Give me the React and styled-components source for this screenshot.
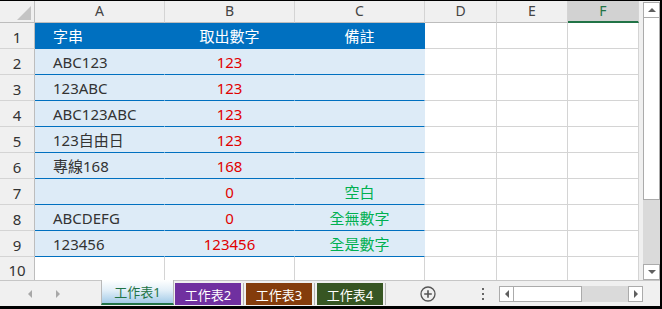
import React from "react";
import styled, { createGlobalStyle } from "styled-components";

const GlobalStyle = createGlobalStyle`
	html, body {
		margin: 0;
		padding: 0;
		background: #ffffff;
	}
	body {
		font-family: "Noto Sans", "Noto Sans CJK TC", sans-serif;
	}
`;

const BLUE = "#0070c0";
const BAND = "#ddebf7";
const GRID = "#d4d4d4";
const RED = "#e00000";
const GREEN = "#00b050";
const EXCEL_GREEN = "#217346";

const columns = ["A", "B", "C", "D", "E", "F"];

const rows = [
	{ a: "字串", b: "取出數字", c: "備註", head: true },
	{ a: "ABC123", b: "123", c: "" },
	{ a: "123ABC", b: "123", c: "" },
	{ a: "ABC123ABC", b: "123", c: "" },
	{ a: "123自由日", b: "123", c: "" },
	{ a: "專線168", b: "168", c: "" },
	{ a: "", b: "0", c: "空白" },
	{ a: "ABCDEFG", b: "0", c: "全無數字" },
	{ a: "123456", b: "123456", c: "全是數字" }
];

const sheets = [
	{ name: "工作表2", color: "#7030a0" },
	{ name: "工作表3", color: "#843c0c" },
	{ name: "工作表4", color: "#375623" }
];

const Window = styled.div`
	width: 662px;
	height: 309px;
	box-sizing: border-box;
	border-top: 1px solid #000;
	border-right: 2px solid #000;
	border-bottom: 3px solid #000;
	background: #f0f0f0;
	display: flex;
	flex-direction: column;
	overflow: hidden;
`;

const SheetArea = styled.div`
	display: flex;
	height: 279px;
`;

const Grid = styled.div`
	display: grid;
	grid-template-columns: 35px 130px 130px 130px 72px 71px 71px;
	grid-template-rows: 22px repeat(9, 26px) 23px;
	background: #fff;
	width: 639px;
`;

const Corner = styled.div`
	box-sizing: border-box;
	background: #f0f0f0;
	border-right: 1px solid #bdbdbd;
	border-bottom: 1px solid #bdbdbd;
	position: relative;
	&::after {
		content: "";
		position: absolute;
		left: 17px;
		top: 5px;
		width: 14px;
		height: 14px;
		background: #c4c4c4;
		clip-path: polygon(100% 0, 100% 100%, 0 100%);
	}
`;

const ColHead = styled.div`
	box-sizing: border-box;
	background: ${p => (p.$selected ? "#d2d2d2" : "#f0f0f0")};
	border-right: 1px solid ${GRID};
	border-bottom: ${p =>
		p.$selected ? `2px solid ${EXCEL_GREEN}` : "1px solid #bdbdbd"};
	color: ${p => (p.$selected ? EXCEL_GREEN : "#444")};
	font-size: 14px;
	display: flex;
	align-items: center;
	justify-content: center;
	padding-bottom: 2px;
`;

const RowHead = styled.div`
	box-sizing: border-box;
	background: #f0f0f0;
	border-right: 1px solid #bdbdbd;
	border-bottom: ${p => (p.$last ? "none" : `1px solid ${GRID}`)};
	color: #333;
	font-size: 15px;
	display: flex;
	align-items: center;
	justify-content: center;
	padding-top: 2px;
`;

const Cell = styled.div`
	box-sizing: border-box;
	background: ${p =>
		p.$kind === "head" ? BLUE : p.$kind === "band" ? BAND : "#fff"};
	border-right: 1px solid
		${p => (p.$kind === "head" ? BLUE : p.$kind === "band" ? BAND : GRID)};
	border-bottom: ${p =>
		p.$last
			? "none"
			: `1px solid ${p.$kind ? BLUE : GRID}`};
	color: ${p => p.$color || "#333"};
	font-size: 15px;
	display: flex;
	align-items: center;
	justify-content: ${p => (p.$align === "left" ? "flex-start" : "center")};
	padding-left: ${p => (p.$align === "left" ? "18px" : "0")};
	white-space: nowrap;
`;

const VScroll = styled.div`
	width: 17px;
	margin-left: 4px;
	padding-top: 1px;
	display: flex;
	flex-direction: column;
`;

const ScrollButton = styled.div`
	box-sizing: border-box;
	width: ${p => (p.$horizontal ? "15px" : "17px")};
	height: ${p => (p.$horizontal ? "16px" : "16px")};
	background: #fff;
	border: 1px solid #ababab;
	display: flex;
	align-items: center;
	justify-content: center;
	flex-shrink: 0;
`;

const Arrow = styled.span`
	width: 0;
	height: 0;
	${p =>
		p.$dir === "up" &&
		`border-left: 4px solid transparent; border-right: 4px solid transparent; border-bottom: 4px solid ${p.$tone || "#5f5f5f"};`}
	${p =>
		p.$dir === "down" &&
		`border-left: 4px solid transparent; border-right: 4px solid transparent; border-top: 4px solid ${p.$tone || "#5f5f5f"};`}
	${p =>
		p.$dir === "left" &&
		`border-top: 4px solid transparent; border-bottom: 4px solid transparent; border-right: 4px solid ${p.$tone || "#5f5f5f"};`}
	${p =>
		p.$dir === "right" &&
		`border-top: 4px solid transparent; border-bottom: 4px solid transparent; border-left: 4px solid ${p.$tone || "#5f5f5f"};`}
`;

const VThumb = styled.div`
	box-sizing: border-box;
	height: 182px;
	background: #fff;
	border: 1px solid #ababab;
	border-top: none;
`;

const Track = styled.div`
	flex: 1;
	background: #dadada;
`;

const TabBar = styled.div`
	box-sizing: border-box;
	height: 26px;
	border-top: 1px solid #c6c6c6;
	display: flex;
	align-items: center;
`;

const NavArea = styled.div`
	width: 101px;
	height: 25px;
	display: flex;
	align-items: center;
	padding-left: 28px;
	gap: 24px;
	box-sizing: border-box;
`;

const ActiveTab = styled.div`
	box-sizing: border-box;
	align-self: flex-start;
	margin-top: -1px;
	width: 73px;
	height: 25px;
	border-left: 1px solid #b9b9b9;
	border-right: 1px solid #b9b9b9;
	border-bottom: 2px solid ${EXCEL_GREEN};
	background: linear-gradient(to bottom, #ffffff 0%, #e2eff8 45%, #a3cbe8 100%);
	color: ${EXCEL_GREEN};
	font-size: 13px;
	display: flex;
	align-items: center;
	justify-content: center;
`;

const Tab = styled.div`
	align-self: flex-start;
	margin-top: 2px;
	margin-left: ${p => p.$gap || 0}px;
	width: 66px;
	height: 22px;
	background: ${p => p.$color};
	color: #fff;
	font-size: 13px;
	display: flex;
	align-items: center;
	justify-content: center;
`;

const TabSep = styled.div`
	align-self: flex-start;
	margin: 2px 2px 0 2px;
	width: 1px;
	height: 22px;
	background: #b4b4b4;
`;

const AddSheet = styled.svg`
	margin-left: 32px;
	flex-shrink: 0;
`;

const Dots = styled.div`
	margin-left: 46px;
	display: flex;
	flex-direction: column;
	gap: 3px;
	& > span {
		width: 2px;
		height: 2px;
		background: #666;
	}
`;

const HScroll = styled.div`
	margin-left: 15px;
	width: 144px;
	height: 16px;
	display: flex;
`;

const HThumb = styled.div`
	box-sizing: border-box;
	width: 68px;
	background: #fff;
	border: 1px solid #ababab;
	border-left: none;
`;

export default function App() {
	return (
		<>
			<GlobalStyle />
			<Window>
				<SheetArea>
					<Grid>
						<Corner />
						{columns.map(c => (
							<ColHead key={c} $selected={c === "F"}>
								{c}
							</ColHead>
						))}
						{rows.map((r, i) => {
							const kind = r.head ? "head" : "band";
							return (
								<React.Fragment key={i}>
									<RowHead>{i + 1}</RowHead>
									<Cell $kind={kind} $align="left" $color={r.head ? "#fff" : "#333"}>
										{r.a}
									</Cell>
									<Cell $kind={kind} $color={r.head ? "#fff" : RED}>
										{r.b}
									</Cell>
									<Cell $kind={kind} $color={r.head ? "#fff" : GREEN}>
										{r.c}
									</Cell>
									<Cell />
									<Cell />
									<Cell />
								</React.Fragment>
							);
						})}
						<RowHead $last>10</RowHead>
						{[0, 1, 2, 3, 4, 5].map(k => (
							<Cell key={k} $last />
						))}
					</Grid>
					<VScroll>
						<ScrollButton>
							<Arrow $dir="up" />
						</ScrollButton>
						<VThumb />
						<Track />
						<ScrollButton>
							<Arrow $dir="down" />
						</ScrollButton>
					</VScroll>
				</SheetArea>
				<TabBar>
					<NavArea>
						<Arrow $dir="left" $tone="#a8a8a8" />
						<Arrow $dir="right" $tone="#a8a8a8" />
					</NavArea>
					<ActiveTab>工作表1</ActiveTab>
					{sheets.map((s, i) => (
						<React.Fragment key={s.name}>
							<Tab $color={s.color} $gap={i === 0 ? 1 : 0}>
								{s.name}
							</Tab>
							<TabSep />
						</React.Fragment>
					))}
					<AddSheet width="16" height="16" viewBox="0 0 16 16">
						<circle cx="8" cy="8" r="7" fill="none" stroke="#555" strokeWidth="1.3" />
						<path d="M8 4.2v7.6M4.2 8h7.6" stroke="#555" strokeWidth="1.6" />
					</AddSheet>
					<Dots>
						<span />
						<span />
						<span />
					</Dots>
					<HScroll>
						<ScrollButton $horizontal>
							<Arrow $dir="left" />
						</ScrollButton>
						<HThumb />
						<Track />
						<ScrollButton $horizontal>
							<Arrow $dir="right" />
						</ScrollButton>
					</HScroll>
				</TabBar>
			</Window>
		</>
	);
}
